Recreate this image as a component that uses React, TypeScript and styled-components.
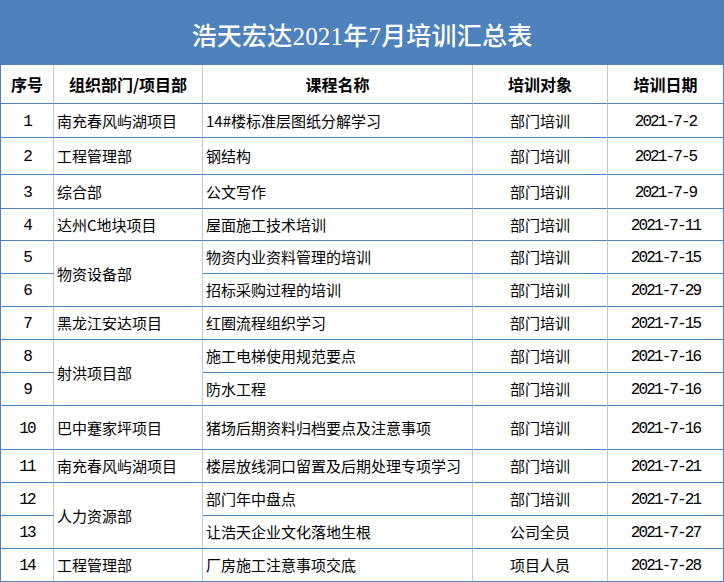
import React from 'react';
import styled, { createGlobalStyle } from 'styled-components';

const BLUE = '#4f81bd';
const GRID = '#b9c9df';

const GlobalStyle = createGlobalStyle`
  html, body {
    margin: 0;
    padding: 0;
    background: #fff;
  }
  body {
    font-family: "Noto Sans CJK SC", "Noto Sans", sans-serif;
    color: #000;
  }
`;

const Sheet = styled.div`
  width: 724px;
`;

const TitleBar = styled.div`
  height: 65px;
  background: ${BLUE};
  display: flex;
  align-items: center;
  justify-content: center;
  color: #fff;
  font-family: "Liberation Serif", "Noto Sans CJK SC", serif;
  font-size: 25px;
  font-weight: 500;
  letter-spacing: 0.2px;
  padding-top: 2px;
  box-sizing: border-box;
`;

const Table = styled.table`
  width: 724px;
  table-layout: fixed;
  border-collapse: separate;
  border-spacing: 0;
`;

const Row = styled.tr<{ $h: number }>`
  height: ${props => props.$h}px;
`;

const Cell = styled.td<{ $align?: 'left' | 'center' }>`
  padding: 0 0 0 ${props => (props.$align === 'left' ? '3px' : '0')};
  text-align: ${props => props.$align || 'center'};
  vertical-align: middle;
  font-size: 15px;
  line-height: 18px;
  white-space: nowrap;
  overflow: hidden;
  border-bottom: 1px solid ${BLUE};
  border-right: 1px solid ${GRID};

  &:first-child {
    border-left: 1px solid ${BLUE};
  }
  &:last-child {
    border-right: 1px solid ${BLUE};
  }
`;

const HeadCell = styled(Cell).attrs({ as: 'th' })`
  font-size: 16px;
  font-weight: 700;
`;

const Mono = styled.span`
  font-family: "Liberation Mono", monospace;
  font-size: 16px;
  letter-spacing: -1.9px;
`;

interface TrainingRow {
  no: number;
  dept?: string;
  span?: number;
  course: string;
  target: string;
  date: string;
  h: number;
}

const rows: TrainingRow[] = [
  { no: 1, dept: '南充春风屿湖项目', course: '14#楼标准层图纸分解学习', target: '部门培训', date: '2021-7-2', h: 34 },
  { no: 2, dept: '工程管理部', course: '钢结构', target: '部门培训', date: '2021-7-5', h: 37 },
  { no: 3, dept: '综合部', course: '公文写作', target: '部门培训', date: '2021-7-9', h: 34 },
  { no: 4, dept: '达州C地块项目', course: '屋面施工技术培训', target: '部门培训', date: '2021-7-11', h: 32 },
  { no: 5, dept: '物资设备部', span: 2, course: '物资内业资料管理的培训', target: '部门培训', date: '2021-7-15', h: 33 },
  { no: 6, course: '招标采购过程的培训', target: '部门培训', date: '2021-7-29', h: 33 },
  { no: 7, dept: '黑龙江安达项目', course: '红圈流程组织学习', target: '部门培训', date: '2021-7-15', h: 33 },
  { no: 8, dept: '射洪项目部', span: 2, course: '施工电梯使用规范要点', target: '部门培训', date: '2021-7-16', h: 33 },
  { no: 9, course: '防水工程', target: '部门培训', date: '2021-7-16', h: 33 },
  { no: 10, dept: '巴中蹇家坪项目', course: '猪场后期资料归档要点及注意事项', target: '部门培训', date: '2021-7-16', h: 44 },
  { no: 11, dept: '南充春风屿湖项目', course: '楼层放线洞口留置及后期处理专项学习', target: '部门培训', date: '2021-7-21', h: 33 },
  { no: 12, dept: '人力资源部', span: 2, course: '部门年中盘点', target: '部门培训', date: '2021-7-21', h: 33 },
  { no: 13, course: '让浩天企业文化落地生根', target: '公司全员', date: '2021-7-27', h: 33 },
  { no: 14, dept: '工程管理部', course: '厂房施工注意事项交底', target: '项目人员', date: '2021-7-28', h: 33 },
];

const App: React.FC = () => {
  return (
    <Sheet>
      <GlobalStyle />
      <TitleBar>浩天宏达2021年7月培训汇总表</TitleBar>
      <Table>
        <colgroup>
          <col style={{ width: 54 }} />
          <col style={{ width: 149 }} />
          <col style={{ width: 270 }} />
          <col style={{ width: 135 }} />
          <col style={{ width: 116 }} />
        </colgroup>
        <thead>
          <Row $h={39}>
            <HeadCell>序号</HeadCell>
            <HeadCell>组织部门/项目部</HeadCell>
            <HeadCell>课程名称</HeadCell>
            <HeadCell>培训对象</HeadCell>
            <HeadCell>培训日期</HeadCell>
          </Row>
        </thead>
        <tbody>
          {rows.map(r => (
            <Row key={r.no} $h={r.h}>
              <Cell><Mono>{r.no}</Mono></Cell>
              {r.dept && (
                <Cell $align="left" rowSpan={r.span || 1}>{r.dept}</Cell>
              )}
              <Cell $align="left">{r.course}</Cell>
              <Cell>{r.target}</Cell>
              <Cell><Mono>{r.date}</Mono></Cell>
            </Row>
          ))}
        </tbody>
      </Table>
    </Sheet>
  );
};

export default App;
